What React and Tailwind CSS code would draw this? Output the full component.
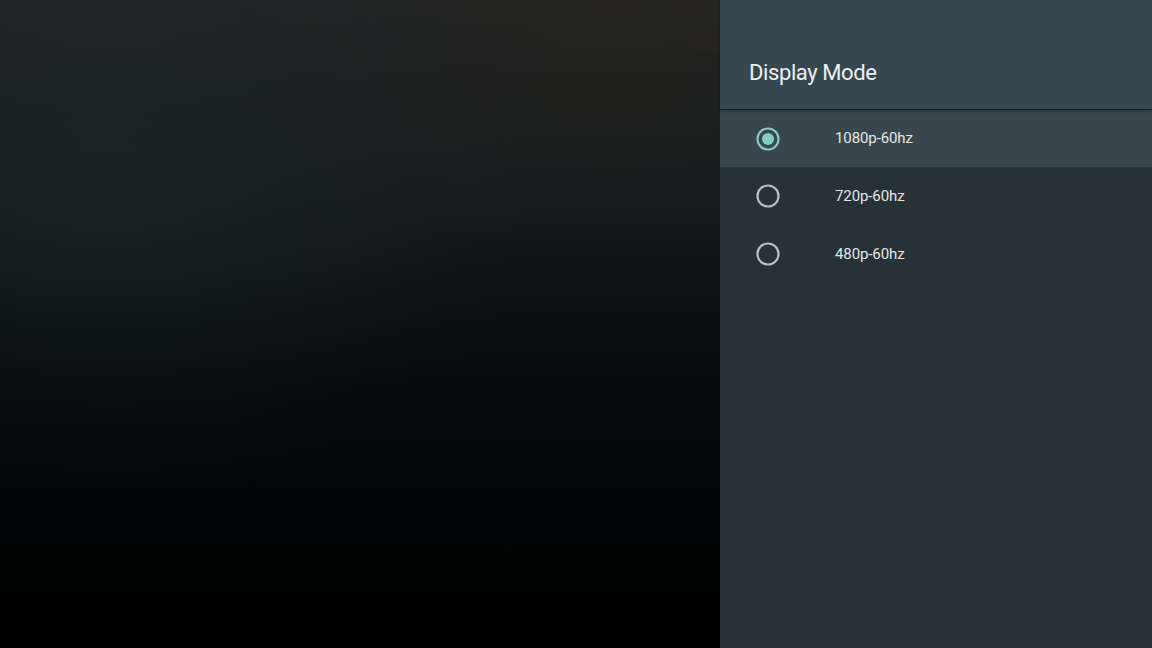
import React from "react";

const items = [
  { label: "1080p-60hz", selected: true },
  { label: "720p-60hz", selected: false },
  { label: "480p-60hz", selected: false },
];

function Radio({ on }) {
  return (
    <svg width="26" height="26" viewBox="0 0 26 26" className="shrink-0">
      <circle cx="13" cy="13" r="10.5" fill="none" stroke={on ? "#80cbc4" : "#bdbdbd"} strokeWidth="2.2" />
      {on && <circle cx="13" cy="13" r="6" fill="#80cbc4" />}
    </svg>
  );
}

export default function App() {
  return (
    <div className="flex h-[648px] w-[1152px] overflow-hidden" style={{ fontFamily: "Roboto, 'Noto Sans', sans-serif" }}>
      <div className="relative h-full w-[720px] bg-[linear-gradient(180deg,#1f2324_0%,#151a1b_30%,#050a0c_60%,#000000_100%)]">
        <div className="absolute inset-0 bg-[radial-gradient(ellipse_60%_45%_at_15%_30%,rgba(30,55,55,0.35),transparent)]" />
        <div className="absolute inset-0 bg-[radial-gradient(ellipse_50%_40%_at_85%_0%,rgba(45,38,30,0.45),transparent)]" />
        <div className="absolute right-0 top-0 h-[52px] w-[60px] bg-[#27241f] [clip-path:polygon(0_0,100%_0,100%_100%,55%_100%)] opacity-60" />
      </div>
      <div className="flex h-full w-[432px] flex-col bg-[#263238]">
        <div className="relative z-10 flex h-[109px] shrink-0 items-end bg-[#37474f] pb-[25px] pl-[29px] shadow-[0_2px_3px_rgba(0,0,0,0.35)]">
          <span className="text-[22px] leading-none tracking-[-0.4px] text-[#eceff1]">Display Mode</span>
        </div>
        <div className="flex flex-col pt-[1px]">
          {items.map((it, i) => (
            <div
              key={it.label}
              className={`flex items-center pl-[35px] ${i === 0 ? "h-[57px]" : "h-[58px]"} ${it.selected ? "bg-[#3a464d]" : ""}`}
            >
              <Radio on={it.selected} />
              <span className="ml-[54px] text-[15px] tracking-[-0.1px] text-[#e4e6e7]">{it.label}</span>
            </div>
          ))}
        </div>
      </div>
    </div>
  );
}
